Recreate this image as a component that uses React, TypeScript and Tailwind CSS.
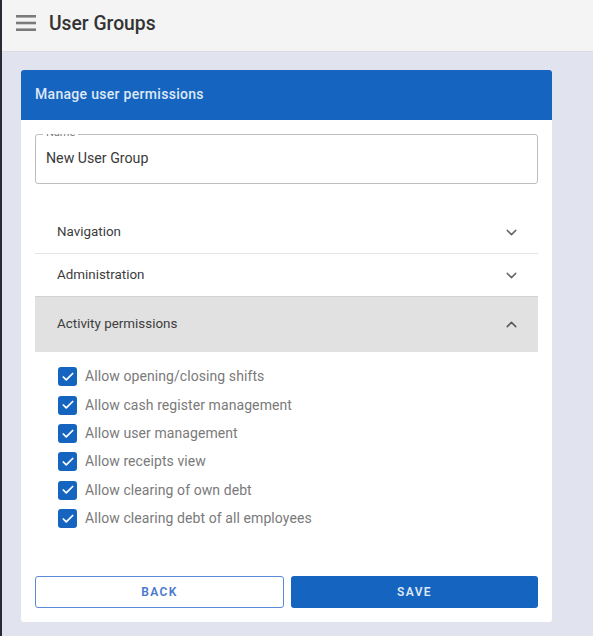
import { ChevronDown, ChevronUp, Check } from 'lucide-react';

const permissions = [
  'Allow opening/closing shifts',
  'Allow cash register management',
  'Allow user management',
  'Allow receipts view',
  'Allow clearing of own debt',
  'Allow clearing debt of all employees',
];

export default function App() {
  return (
    <div className="flex h-[636px] w-[593px] overflow-hidden bg-[#e1e4ee] font-['Roboto',sans-serif]">
      <div className="w-[2px] shrink-0 bg-[#2a2a33]" />
      <div className="min-w-0 flex-1">
        <header className="flex h-[52px] items-center border-b border-[#d9dbe2] bg-[#f4f4f4] pb-[5px] pl-[14px]">
          <svg width="20" height="16" viewBox="0 0 20 16" className="text-[#7b7b7b]">
            <rect y="0" width="20" height="2.6" fill="currentColor" />
            <rect y="6.7" width="20" height="2.6" fill="currentColor" />
            <rect y="13.4" width="20" height="2.6" fill="currentColor" />
          </svg>
          <h1 className="mt-[2px] ml-[13px] text-[19.3px] font-medium text-[#333]">User Groups</h1>
        </header>

        <main className="mt-[18px] ml-[19px] w-[531px] rounded-[3px] bg-white">
          <div className="flex h-[50px] items-center rounded-t-[3px] bg-[#1565c0] px-[14px] pb-[2px] text-[14px] font-medium tracking-[0.3px] text-[#dfe8f5]">
            Manage user permissions
          </div>

          <div className="px-[14px] pt-[14px]">
            <div className="relative flex h-[50px] items-center rounded-[3px] border border-[#bdbdbd] px-[10px] pb-[1px] text-[14.2px] text-[#3a3a3a]">
              <span className="absolute -top-[1px] left-[7px] h-[4px] overflow-hidden bg-white px-[3px] text-[11px] leading-[4px] text-[#777]">
                <span className="relative -top-[3px]">Name</span>
              </span>
              New User Group
            </div>

            <div className="mt-[27px]">
              <div className="flex h-[43px] items-center justify-between border-b border-[#e4e4e4] pr-[18px] pl-[22px] text-[13.4px] text-[#3c3c3c]">
                Navigation
                <ChevronDown className="h-[17px] w-[17px] text-[#666]" />
              </div>
              <div className="flex h-[42px] items-center justify-between pr-[18px] pl-[22px] text-[13.4px] text-[#3c3c3c]">
                Administration
                <ChevronDown className="h-[17px] w-[17px] text-[#666]" />
              </div>
              <div className="flex h-[56px] items-center justify-between border-t border-[#d2d2d2] bg-[#e1e1e1] pr-[18px] pb-[1px] pl-[22px] text-[13.4px] text-[#3c3c3c]">
                Activity permissions
                <ChevronUp className="h-[17px] w-[17px] text-[#555]" />
              </div>
            </div>

            <ul className="mt-[15.3px] flex flex-col gap-[9.4px] pl-[23px]">
              {permissions.map((label) => (
                <li key={label} className="flex h-[19px] items-center gap-[8px] text-[14px] tracking-[0.08px] text-[#7a7a7a]">
                  <span className="flex h-[19px] w-[19px] items-center justify-center rounded-[3px] bg-[#1565c0]">
                    <Check className="h-[14px] w-[14px] text-white" strokeWidth={3} />
                  </span>
                  {label}
                </li>
              ))}
            </ul>

            <div className="mt-[47.7px] flex gap-[7px] pb-[14px]">
              <button className="h-[32px] flex-1 rounded-[3px] border border-[#5b8ad6] bg-white text-[12px] font-semibold tracking-[1.4px] text-[#4a78cc]">
                BACK
              </button>
              <button className="h-[32px] flex-1 rounded-[3px] bg-[#1565c0] text-[12px] font-semibold tracking-[1.4px] text-[#dfe8f5]">
                SAVE
              </button>
            </div>
          </div>
        </main>
      </div>
    </div>
  );
}
